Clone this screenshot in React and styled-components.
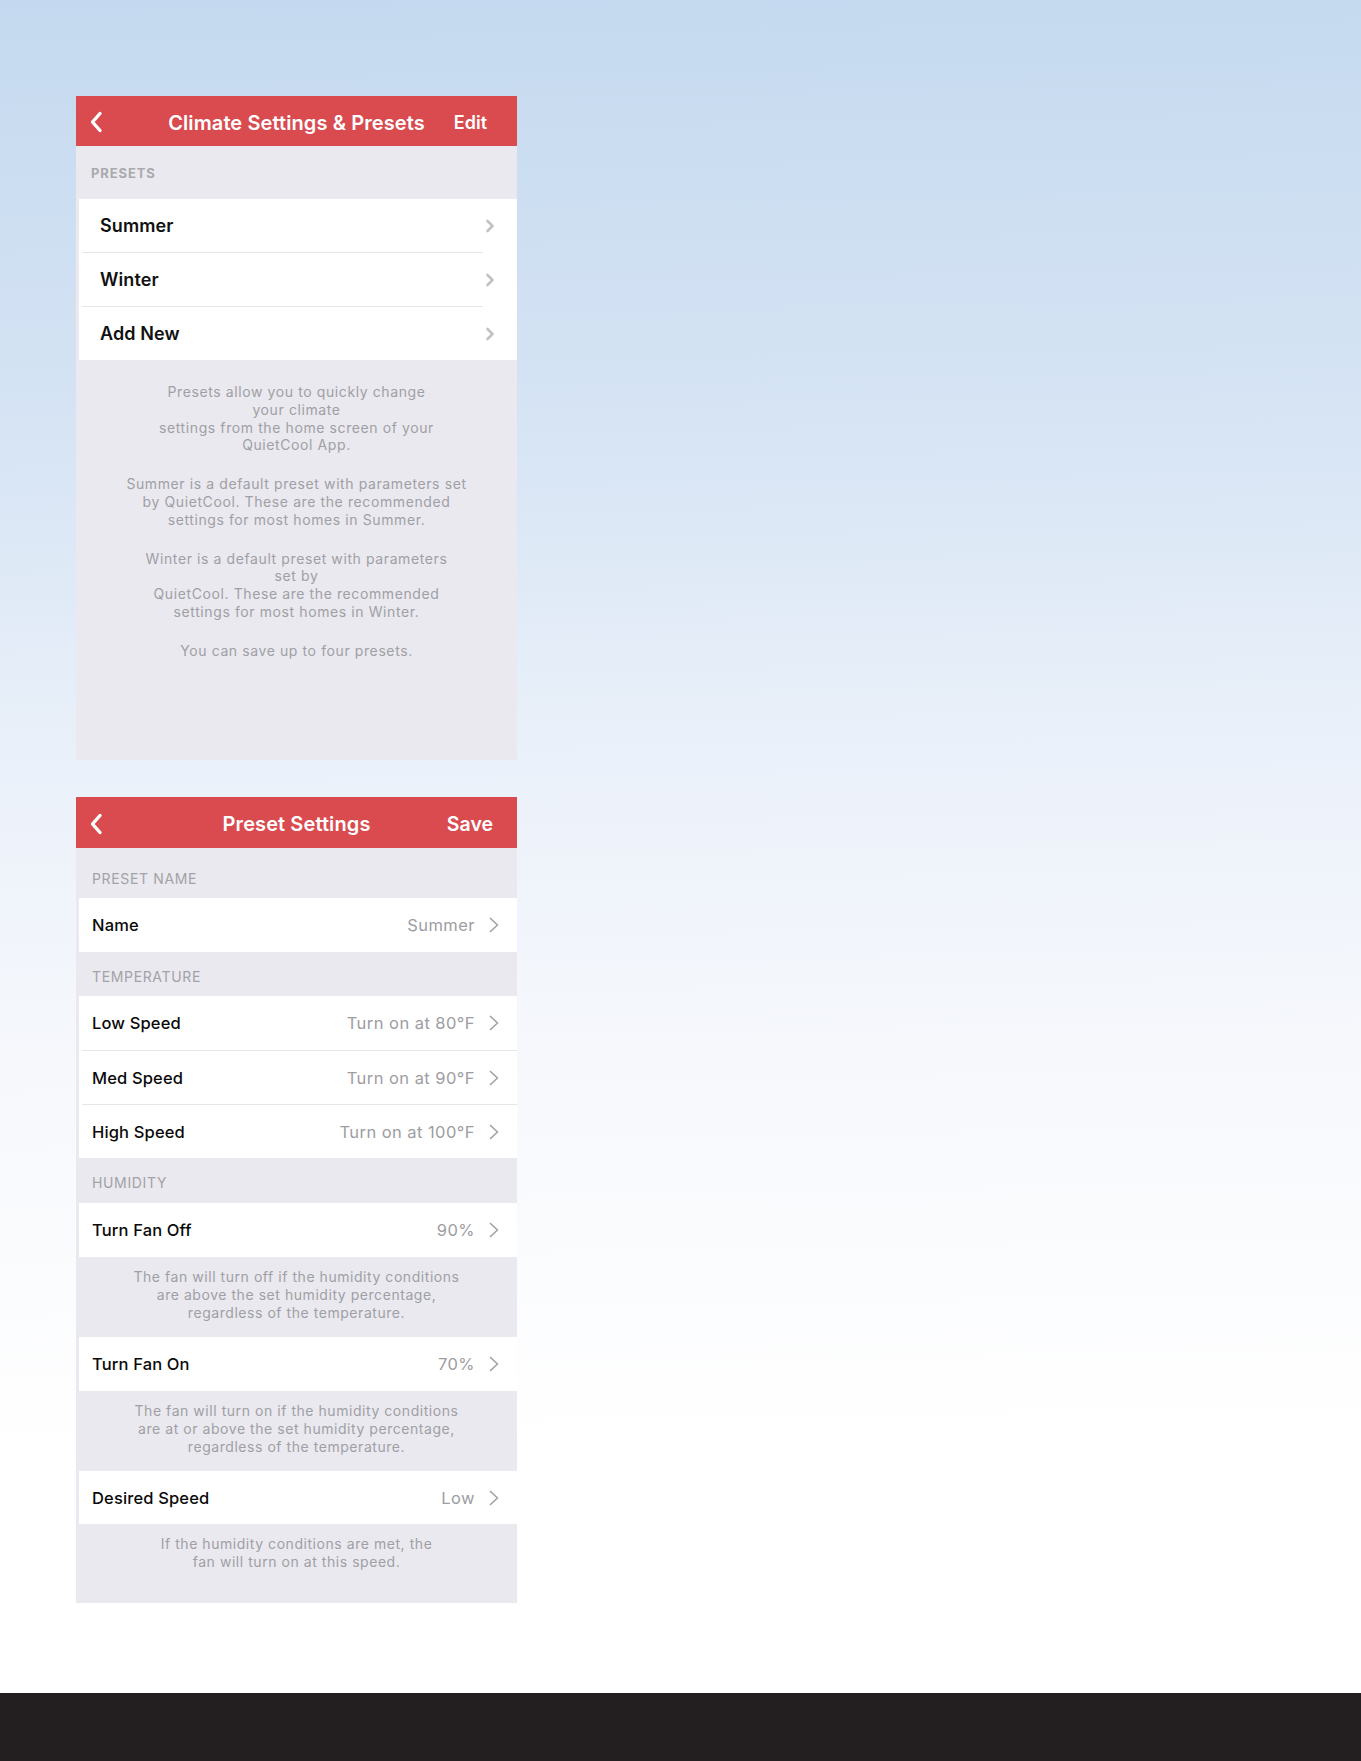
import React from 'react';
import styled, { createGlobalStyle } from 'styled-components';

const GlobalStyle = createGlobalStyle`
  html, body {
    margin: 0;
    padding: 0;
  }
  body {
    font-family: Inter, "Noto Sans", "Liberation Sans", sans-serif;
    -webkit-font-smoothing: antialiased;
  }
`;

const Page = styled.div`
  width: 1361px;
  display: flex;
  flex-direction: column;
`;

const Backdrop = styled.main`
  height: 1693px;
  box-sizing: border-box;
  padding: 96px 0 0 76px;
  background: linear-gradient(179deg, #c4d9ef 0%, #d6e4f4 25%, #ebf1fa 45%, #f6f8fc 62%, #ffffff 85%);
  display: flex;
  flex-direction: column;
  gap: 37px;
`;

const Footer = styled.footer`
  height: 68px;
  background: #231f20;
`;

const Phone = styled.section`
  width: 441px;
  height: ${p => p.$height}px;
  background: #eae9ef;
  display: flex;
  flex-direction: column;
`;

const NavBar = styled.header`
  height: ${p => p.$height}px;
  flex-shrink: 0;
  background: #d94b4f;
  display: grid;
  grid-template-columns: 1fr auto 1fr;
  align-items: center;
  color: #fff;
`;

const BackButton = styled.span`
  justify-self: start;
  display: flex;
  padding-left: 13px;
  padding-top: 2px;
`;

const NavTitle = styled.h1`
  margin: 0;
  font-size: 20px;
  font-weight: 600;
  letter-spacing: 0.1px;
  padding-top: ${p => p.$drop}px;
`;

const NavAction = styled.span`
  justify-self: end;
  padding-right: ${p => p.$inset}px;
  padding-top: ${p => p.$drop}px;
  font-size: ${p => p.$size}px;
  font-weight: 600;
`;

const SectionLabel = styled.div`
  height: ${p => p.$height}px;
  box-sizing: border-box;
  display: flex;
  align-items: center;
  padding-left: ${p => p.$indent}px;
  padding-top: ${p => p.$drop}px;
  font-size: ${p => (p.$bold ? 13 : 14)}px;
  font-weight: ${p => (p.$bold ? 700 : 400)};
  letter-spacing: ${p => (p.$bold ? 0.9 : 0.65)}px;
  color: ${p => (p.$bold ? '#a9a9ae' : '#a2a2a7')};
`;

const List = styled.div`
  margin-left: 3px;
  background: #fff;
  display: flex;
  flex-direction: column;
`;

const PresetRow = styled.div`
  height: 53px;
  display: flex;
  align-items: center;
  padding: 0 22px 0 21px;
  font-size: 18px;
  font-weight: 600;
  letter-spacing: 0.1px;
  color: #111;
`;

const Separator = styled.div`
  height: 1px;
  background: #e6e6ea;
  margin: 0 ${p => p.$right}px 0 3px;
`;

const RowLabel = styled.span`
  flex: 1;
`;

const SettingRow = styled.div`
  height: ${p => p.$height || 54}px;
  display: flex;
  align-items: center;
  padding: 0 18px 0 13px;
  font-size: 16.5px;
  font-weight: 500;
  letter-spacing: 0.15px;
  color: #0a0a0a;
`;

const Value = styled.span`
  font-weight: 400;
  letter-spacing: 0.45px;
  color: #9d9da2;
  margin-right: 14px;
`;

const InfoBlock = styled.div`
  padding: ${p => p.$top}px 0 0;
  display: flex;
  flex-direction: column;
  gap: 21px;
  text-align: center;
  font-size: 14px;
  line-height: 17.8px;
  letter-spacing: 0.6px;
  color: #9fa0a5;
`;

const Note = styled.div`
  height: ${p => p.$height}px;
  box-sizing: border-box;
  padding-top: ${p => p.$top}px;
  text-align: center;
  font-size: 14px;
  line-height: 17.9px;
  letter-spacing: 0.55px;
  color: #9fa0a5;
`;

const Paragraph = styled.p`
  margin: 0;
`;

const Line = styled.span`
  display: block;
  white-space: nowrap;
`;

const BackIcon = () => (
  <svg width="14" height="22" viewBox="0 0 14 22" fill="none">
    <path d="M11 2.5 L3.5 11 L11 19.5" stroke="#fff" strokeWidth="3.4" strokeLinecap="round" strokeLinejoin="round" />
  </svg>
);

const Chevron = ({ bold }) =>
  bold ? (
    <svg width="10" height="14" viewBox="0 0 10 14" fill="none">
      <path d="M2.5 2 L7.5 7 L2.5 12" stroke="#c2c2c6" strokeWidth="2.6" strokeLinecap="round" strokeLinejoin="round" />
    </svg>
  ) : (
    <svg width="10" height="16" viewBox="0 0 10 16" fill="none">
      <path d="M1.5 1.5 L8.5 8 L1.5 14.5" stroke="#a3a3a8" strokeWidth="1.7" strokeLinecap="round" strokeLinejoin="round" />
    </svg>
  );

const Lines = ({ items }) => items.map((t, i) => <Line key={i}>{t}</Line>);

const presets = ['Summer', 'Winter', 'Add New'];

const presetInfo = [
  ['Presets allow you to quickly change', 'your climate', 'settings from the home screen of your', 'QuietCool App.'],
  ['Summer is a default preset with parameters set', 'by QuietCool. These are the recommended', 'settings for most homes in Summer.'],
  ['Winter is a default preset with parameters', 'set by', 'QuietCool. These are the recommended', 'settings for most homes in Winter.'],
  ['You can save up to four presets.'],
];

const temperature = [
  ['Low Speed', 'Turn on at 80°F'],
  ['Med Speed', 'Turn on at 90°F'],
  ['High Speed', 'Turn on at 100°F'],
];

const ClimatePresets = () => (
  <Phone $height={664}>
    <NavBar $height={50}>
      <BackButton><BackIcon /></BackButton>
      <NavTitle $drop={3}>Climate Settings &amp; Presets</NavTitle>
      <NavAction $inset={30} $size={18} $drop={3}>Edit</NavAction>
    </NavBar>
    <SectionLabel $height={53} $indent={15} $drop={0} $bold>PRESETS</SectionLabel>
    <List>
      {presets.map((name, i) => (
        <React.Fragment key={name}>
          {i > 0 && <Separator $right={34} />}
          <PresetRow>
            <RowLabel>{name}</RowLabel>
            <Chevron bold />
          </PresetRow>
        </React.Fragment>
      ))}
    </List>
    <InfoBlock $top={23}>
      {presetInfo.map((p, i) => (
        <Paragraph key={i}><Lines items={p} /></Paragraph>
      ))}
    </InfoBlock>
  </Phone>
);

const PresetSettings = () => (
  <Phone $height={806}>
    <NavBar $height={51}>
      <BackButton><BackIcon /></BackButton>
      <NavTitle $drop={2}>Preset Settings</NavTitle>
      <NavAction $inset={24} $size={19.5} $drop={3}>Save</NavAction>
    </NavBar>
    <SectionLabel $height={50} $indent={16} $drop={10}>PRESET NAME</SectionLabel>
    <List>
      <SettingRow>
        <RowLabel>Name</RowLabel>
        <Value>Summer</Value>
        <Chevron />
      </SettingRow>
    </List>
    <SectionLabel $height={44} $indent={16} $drop={4}>TEMPERATURE</SectionLabel>
    <List>
      {temperature.map(([label, value], i) => (
        <React.Fragment key={label}>
          {i > 0 && <Separator $right={0} />}
          <SettingRow $height={i > 0 ? 53 : 54}>
            <RowLabel>{label}</RowLabel>
            <Value>{value}</Value>
            <Chevron />
          </SettingRow>
        </React.Fragment>
      ))}
    </List>
    <SectionLabel $height={45} $indent={16} $drop={4}>HUMIDITY</SectionLabel>
    <List>
      <SettingRow>
        <RowLabel>Turn Fan Off</RowLabel>
        <Value>90%</Value>
        <Chevron />
      </SettingRow>
    </List>
    <Note $height={80} $top={11}>
      <Lines items={['The fan will turn off if the humidity conditions', 'are above the set humidity percentage,', 'regardless of the temperature.']} />
    </Note>
    <List>
      <SettingRow>
        <RowLabel>Turn Fan On</RowLabel>
        <Value>70%</Value>
        <Chevron />
      </SettingRow>
    </List>
    <Note $height={80} $top={11}>
      <Lines items={['The fan will turn on if the humidity conditions', 'are at or above the set humidity percentage,', 'regardless of the temperature.']} />
    </Note>
    <List>
      <SettingRow $height={53}>
        <RowLabel>Desired Speed</RowLabel>
        <Value>Low</Value>
        <Chevron />
      </SettingRow>
    </List>
    <Note $height={79} $top={11}>
      <Lines items={['If the humidity conditions are met, the', 'fan will turn on at this speed.']} />
    </Note>
  </Phone>
);

const App = () => (
  <Page>
    <GlobalStyle />
    <Backdrop>
      <ClimatePresets />
      <PresetSettings />
    </Backdrop>
    <Footer />
  </Page>
);

export default App;
